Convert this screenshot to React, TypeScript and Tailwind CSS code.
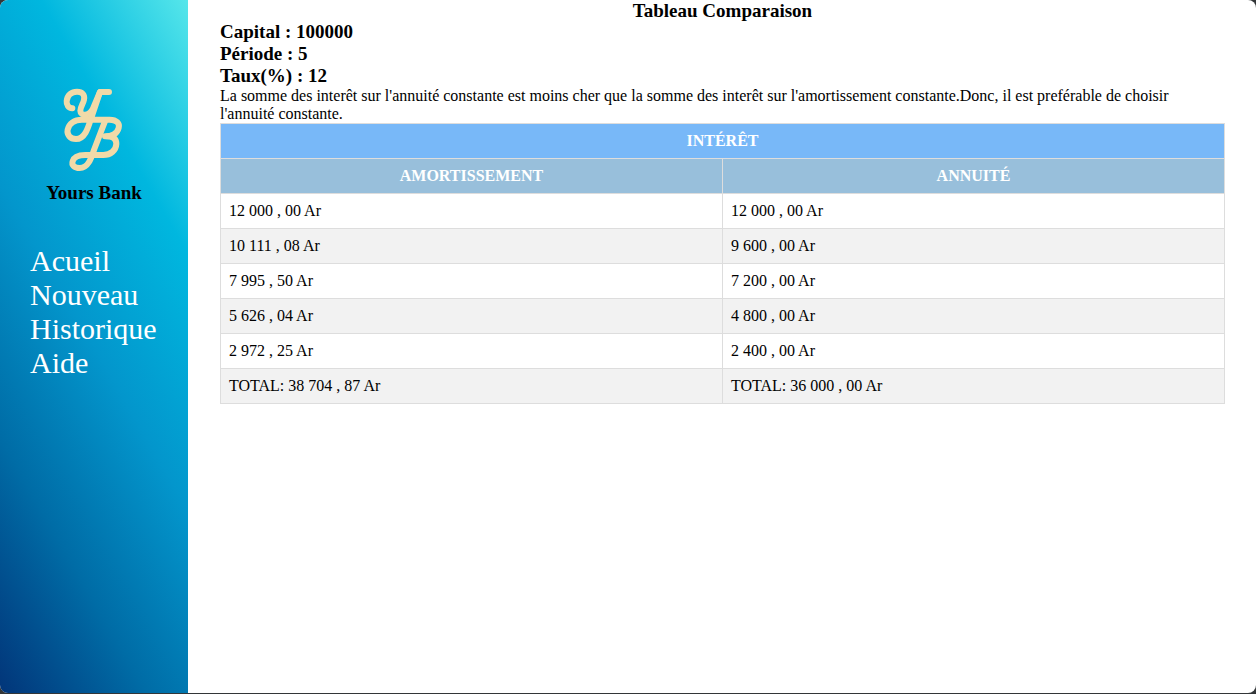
const links = ["Acueil", "Nouveau", "Historique", "Aide"];

const rows = [
  ["12 000 , 00 Ar", "12 000 , 00 Ar"],
  ["10 111 , 08 Ar", "9 600 , 00 Ar"],
  ["7 995 , 50 Ar", "7 200 , 00 Ar"],
  ["5 626 , 04 Ar", "4 800 , 00 Ar"],
  ["2 972 , 25 Ar", "2 400 , 00 Ar"],
  ["TOTAL: 38 704 , 87 Ar", "TOTAL: 36 000 , 00 Ar"],
];

function Logo() {
  return (
    <svg
      viewBox="3 0 210 276"
      className="h-[92px] w-[70px]"
      fill="none"
      stroke="#f1daa8"
      strokeWidth="18"
      strokeLinecap="round"
      strokeLinejoin="round"
      aria-hidden="true"
    >
      <path d="M43 73C31 72 25 62 26 51C28 33 41 23 57 23C73 23 81 33 78 47C76 58 67 69 67 80C67 89 74 93 82 92C93 91 103 80 107 69L126 24H153" />
      <path d="M126 24L98 107C90 133 80 165 54 165C36 165 26 152 29 137C33 119 49 107 72 107H155C176 107 186 119 182 132C178 147 165 157 141 157" />
      <path d="M142 109L109 195C99 225 90 252 65 252C49 252 40 243 44 232C48 217 62 213 82 213H136C158 213 174 199 175 180C175 166 167 158 150 157" />
    </svg>
  );
}

export default function App() {
  return (
    <div className="min-h-screen bg-[#333638] pb-px font-['Liberation_Serif',serif] text-black">
      <div className="flex min-h-[calc(100vh-1px)] overflow-hidden rounded-lg bg-white">
        <aside className="w-[188px] shrink-0 bg-[linear-gradient(60deg,#023579_0%,#006ca6_25%,#0396cc_50%,#00b7df_75%,#56e6ea_100%)]">
          <div className="flex flex-col items-center pt-[84px]">
            <Logo />
            <h1 className="mt-1.5 text-[19px] leading-[22px] font-bold">Yours Bank</h1>
          </div>
          <nav className="mt-10 flex flex-col items-start pl-[30px] text-[30px] leading-[34px] text-white">
            {links.map((label) => (
              <a key={label} href="#">
                {label}
              </a>
            ))}
          </nav>
        </aside>
        <main className="min-w-0 flex-1 pr-[31px] pl-8">
          <h2 className="text-center text-[19px] leading-[21px] font-bold">Tableau Comparaison</h2>
          <h3 className="text-[19px] leading-[22px] font-bold">Capital : 100000</h3>
          <h3 className="text-[19px] leading-[22px] font-bold">Période : 5</h3>
          <h3 className="text-[19px] leading-[22px] font-bold">Taux(%) : 12</h3>
          <p className="text-base leading-[18px]">
            La somme des interêt sur l'annuité constante est moins cher que la somme des interêt sur
            l'amortissement constante.Donc, il est preférable de choisir l'annuité constante.
          </p>
          <table className="w-full table-fixed border-collapse text-base leading-[18px]">
            <thead className="text-white">
              <tr className="bg-[#78b8f8]">
                <th colSpan={2} className="border border-[#dddddd] p-2">
                  INTÉRÊT
                </th>
              </tr>
              <tr className="bg-[#98bfdb]">
                <th className="border border-[#dddddd] p-2">AMORTISSEMENT</th>
                <th className="border border-[#dddddd] p-2">ANNUITÉ</th>
              </tr>
            </thead>
            <tbody>
              {rows.map(([amortissement, annuite]) => (
                <tr key={amortissement} className="even:bg-[#f2f2f2]">
                  <td className="border border-[#dddddd] p-2">{amortissement}</td>
                  <td className="border border-[#dddddd] p-2">{annuite}</td>
                </tr>
              ))}
            </tbody>
          </table>
        </main>
      </div>
    </div>
  );
}
